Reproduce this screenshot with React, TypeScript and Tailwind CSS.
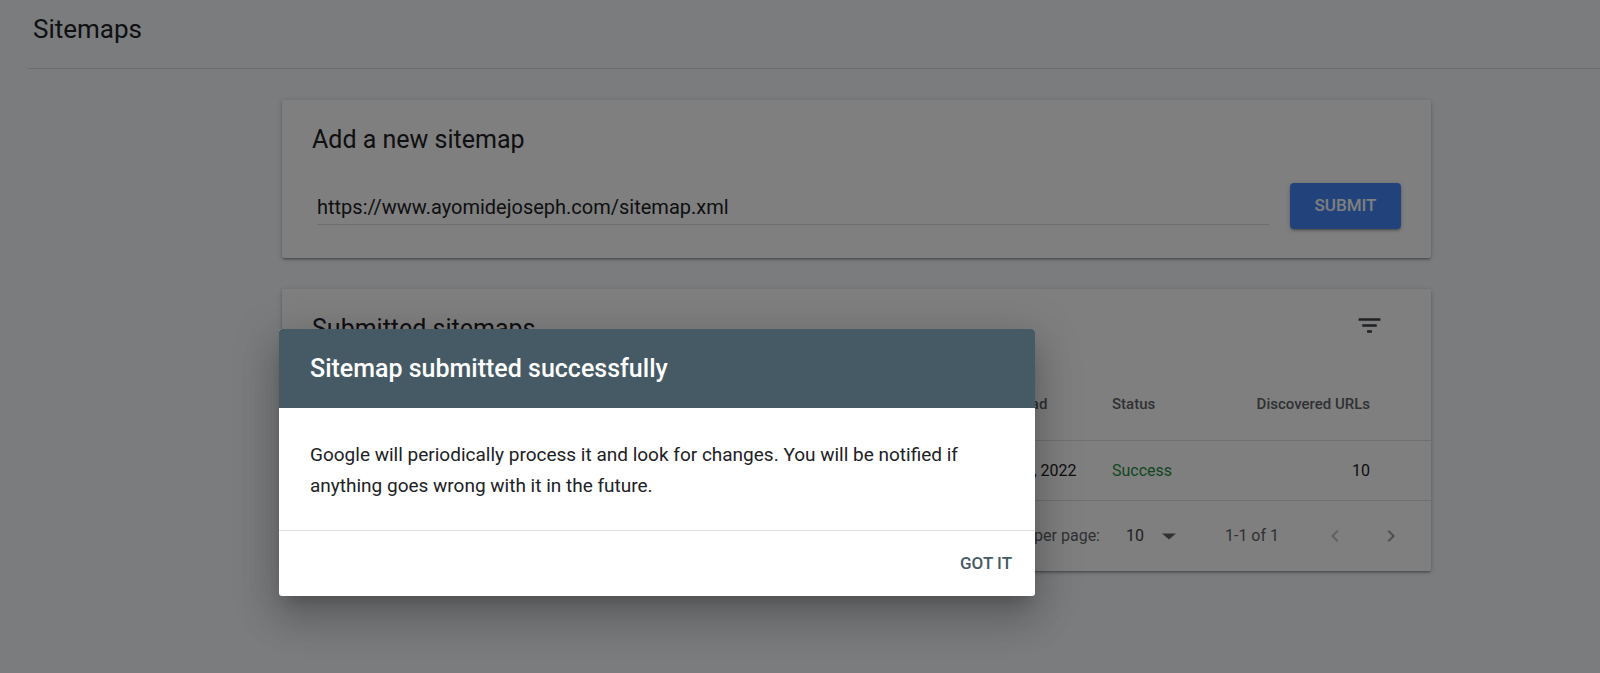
import React from 'react';

const FilterIcon = () => (
  <svg viewBox="0 0 24 24" className="w-[29px] h-[29px]" fill="#3c4043">
    <path d="M10 18h4v-2h-4v2zM3 6v2h18V6H3zm3 7h12v-2H6v2z" />
  </svg>
);

const ChevronLeft = ({ color }: { color: string }) => (
  <svg viewBox="0 0 24 24" className="w-6 h-6" fill={color}>
    <path d="M15.41 7.41L14 6l-6 6 6 6 1.41-1.41L10.83 12z" />
  </svg>
);

const ChevronRight = ({ color }: { color: string }) => (
  <svg viewBox="0 0 24 24" className="w-6 h-6" fill={color}>
    <path d="M10 6L8.59 7.41 13.17 12l-4.58 4.59L10 18l6-6z" />
  </svg>
);

const DropArrow = () => (
  <svg viewBox="0 0 24 24" className="w-6 h-6" fill="#5f6368">
    <path d="M5 9.5l7 6 7-6z" />
  </svg>
);

const cols = 'grid grid-cols-[278px_200px_195px_127px_138px_120px] pl-[30px] pr-[61px] items-center';

const App = () => {
  return (
    <div className="relative w-full h-[673px] overflow-hidden bg-[#f6f8fc] [font-family:Roboto,'Noto_Sans',sans-serif] text-[#202124]">
      {/* page header */}
      <div className="ml-[28px] h-[69px] border-b border-[#dadce0] pl-[5px] pt-[13px]">
        <h1 className="text-[26px] leading-[32px]">Sitemaps</h1>
      </div>

      {/* add sitemap card */}
      <div className="ml-[282px] mt-[31px] w-[1149px] bg-white rounded-[2px] shadow-[0_2px_2px_0_rgba(0,0,0,0.14),0_3px_1px_-2px_rgba(0,0,0,0.12),0_1px_5px_0_rgba(0,0,0,0.2)] pl-[30px] pr-[30px] pt-[25px] pb-[29px]">
        <h2 className="text-[25px] leading-[30px]">Add a new sitemap</h2>
        <div className="mt-[28px] flex items-start h-[46px]">
          <div className="ml-[5px] flex-1 pt-[12px] pb-[5px] border-b border-[#dadce0]">
            <div className="text-[20px] leading-[24px]">https://www.ayomidejoseph.com/sitemap.xml</div>
          </div>
          <button className="ml-[21px] w-[111px] h-[46px] rounded-[4px] bg-[#4285f4] text-white text-[17px] font-medium shadow-[0_2px_2px_0_rgba(0,0,0,0.14),0_3px_1px_-2px_rgba(0,0,0,0.12),0_1px_5px_0_rgba(0,0,0,0.2)]">
            SUBMIT
          </button>
        </div>
      </div>

      {/* submitted sitemaps card */}
      <div className="ml-[282px] mt-[31px] w-[1149px] bg-white rounded-[2px] shadow-[0_2px_2px_0_rgba(0,0,0,0.14),0_3px_1px_-2px_rgba(0,0,0,0.12),0_1px_5px_0_rgba(0,0,0,0.2)]">
        <div className="h-[80px] flex justify-between items-start pl-[30px] pr-[47px]">
          <h2 className="mt-[25px] text-[25px] leading-[30px]">Submitted sitemaps</h2>
          <div className="mt-[22px]">
            <FilterIcon />
          </div>
        </div>
        <div className={`${cols} h-[72px] border-b border-[#e0e0e0] text-[15px] font-medium text-[#5f6368]`}>
          <div>Sitemap</div>
          <div>Type</div>
          <div>Submitted</div>
          <div>Last read</div>
          <div>Status</div>
          <div className="text-right">Discovered URLs</div>
        </div>
        <div className={`${cols} h-[60px] border-b border-[#e0e0e0] text-[16px]`}>
          <div>/sitemap.xml</div>
          <div>Sitemap</div>
          <div>Jun 24, 2022</div>
          <div>Jun 24, 2022</div>
          <div className="text-[#1e8e3e]">Success</div>
          <div className="text-right">10</div>
        </div>
        <div className="h-[70px] flex items-center justify-end pr-[28px] text-[16px] text-[#5f6368]">
          <span>Rows per page:</span>
          <span className="ml-[26px] text-[#3c4043]">10</span>
          <span className="ml-[13px]">
            <DropArrow />
          </span>
          <span className="ml-[44px]">1-1 of 1</span>
          <span className="ml-[44px]">
            <ChevronLeft color="#bdc1c6" />
          </span>
          <span className="ml-[32px]">
            <ChevronRight color="#9aa0a6" />
          </span>
        </div>
      </div>

      {/* overlay + dialog */}
      <div className="absolute inset-0 bg-black/50" />
      <div className="absolute left-[279px] top-[329px] w-[756px] bg-white rounded-[3px] overflow-hidden shadow-[0_11px_15px_-7px_rgba(0,0,0,0.2),0_24px_38px_3px_rgba(0,0,0,0.14),0_9px_46px_8px_rgba(0,0,0,0.12)]">
        <div className="h-[79px] bg-[#455a64] flex items-center px-[31px]">
          <h3 className="text-white text-[25px] font-medium">Sitemap submitted successfully</h3>
        </div>
        <div className="px-[31px] pt-[31px] pb-[29px] text-[19px] leading-[31px] text-[#202124] border-b border-[#e0e0e0]">
          Google will periodically process it and look for changes. You will be notified if anything goes wrong with it in the future.
        </div>
        <div className="h-[65px] flex items-center justify-end pr-[23px]">
          <button className="text-[17px] font-medium text-[#455a64]">GOT IT</button>
        </div>
      </div>
    </div>
  );
};

export default App;
